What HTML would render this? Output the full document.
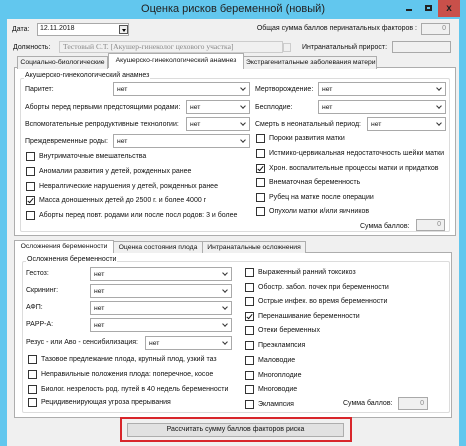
<!DOCTYPE html>
<html><head><meta charset="utf-8"><style>
*{box-sizing:border-box;margin:0;padding:0}
body{width:466px;height:446px;background:#62c7ee;position:relative;overflow:hidden;font-family:"Liberation Sans",sans-serif;font-size:7px;color:#111}
.a{position:absolute;white-space:nowrap}
.cl{position:absolute;left:7px;top:19px;width:452px;height:427px;background:#f0f0f0}
.in{position:absolute;background:#fff;border:1px solid #a9a9a9;line-height:10px}
.cb{position:absolute;background:#fff;border:1px solid #a9a9a9;height:14px;padding:3px 0 0 3px;font-size:6.8px;white-space:nowrap}
.cb:after{content:"";position:absolute;right:4px;top:3px;width:3px;height:3px;border-right:1px solid #333;border-bottom:1px solid #333;transform:rotate(45deg)}
.ck{position:absolute;white-space:nowrap;padding-left:13px;line-height:9px}
.ck:before{content:"";position:absolute;left:0;top:0;width:9px;height:9px;border:1px solid #333;background:#fff;box-sizing:border-box}
.ck.on:after{content:"";position:absolute;left:3px;top:1px;width:2px;height:5px;border-right:1.5px solid #111;border-bottom:1.5px solid #111;transform:rotate(40deg)}
.gb{position:absolute;border:1px solid #dcdcdc;border-radius:2px}
.tab{position:absolute;border:1px solid #adadad;border-bottom:none;background:#f0f0f0;padding:2px 2px;height:13px;white-space:nowrap;overflow:hidden;text-align:center;font-size:6.8px}
.panel{position:absolute;border:1px solid #adadad;background:#fff}
</style></head><body>
<div class="a" style="left:0;top:3px;width:466px;text-align:center;font-size:11px;color:#222">Оценка рисков беременной (новый)</div>
<div class="a" style="left:399px;top:0;width:20px;height:17px;background:#62c7ee"><div style="position:absolute;left:7px;top:9px;width:6px;height:2px;background:#222"></div></div>
<div class="a" style="left:419px;top:0;width:19px;height:17px"><div style="position:absolute;left:6px;top:5px;width:7px;height:6px;border:2px solid #222"></div></div>
<div class="a" style="left:438px;top:0;width:22px;height:17px;background:#c9504a;color:#222;font-weight:bold;font-size:10px;text-align:center;line-height:17px">x</div>
<div class="cl"></div>

<div class="a" style="left:12px;top:26px">Дата:</div>
<div class="in" style="left:37px;top:23px;width:92px;height:13px;padding:0 2px;font-size:7px">12.11.2018</div>
<div class="a" style="left:119px;top:25px;width:9px;height:9px;border:1px solid #555;background:#eee"><div style="position:absolute;left:2px;top:3px;border:2px solid transparent;border-top:3px solid #000"></div></div>
<div class="a" style="right:49px;top:25px">Общая сумма баллов перинатальных факторов :</div>
<div class="in" style="left:421px;top:23px;width:29px;height:12px;background:#f0f0f0;text-align:right;padding-right:3px;color:#888">0</div>

<div class="a" style="left:13px;top:44px">Должность:</div>
<div class="in" style="left:59px;top:41px;width:224px;height:12px;background:#f0f0f0;border-color:#ccc;color:#888;font-family:'Liberation Serif',serif;font-size:7.6px;padding-left:3px;white-space:nowrap;overflow:hidden">Тестовый С.Т.  [Акушер-гинеколог цехового участка]</div>
<div class="a" style="left:283px;top:43px;width:8px;height:9px;border:1px solid #ccc"></div>
<div class="a" style="left:302px;top:44px">Интранатальный прирост:</div>
<div class="in" style="left:392px;top:41px;width:59px;height:12px;background:#f0f0f0"></div>

<div class="panel" style="left:14px;top:67px;width:442px;height:169px"></div>
<div class="tab" style="left:17px;top:56px;width:91px">Социально-биологические</div>
<div class="tab" style="left:243px;top:56px;width:134px">Экстрагенитальные заболевания матери</div>
<div class="tab" style="left:108px;top:53px;width:136px;height:15px;background:#fff;padding-top:3px">Акушерско-гинекологический анамнез</div>

<div class="gb" style="left:20px;top:78px;width:430px;height:154px"></div>
<div class="a" style="left:24px;top:72px;background:#fff;padding:0 1px">Акушерско-гинекологический анамнез</div>
<div class="a" style="left:25px;top:86px">Паритет:</div><div class="cb" style="left:113px;top:82px;width:137px">нет</div>
<div class="a" style="left:255px;top:86px">Мертворождение:</div><div class="cb" style="left:318px;top:82px;width:128px">нет</div>
<div class="a" style="left:25px;top:104px">Аборты перед первыми предстоящими родами:</div><div class="cb" style="left:186px;top:100px;width:64px">нет</div>
<div class="a" style="left:255px;top:104px">Бесплодие:</div><div class="cb" style="left:318px;top:100px;width:128px">нет</div>
<div class="a" style="left:25px;top:121px">Вспомогательные репродуктивные технологии:</div><div class="cb" style="left:186px;top:117px;width:64px">нет</div>
<div class="a" style="left:255px;top:121px">Смерть в неонатальный период:</div><div class="cb" style="left:367px;top:117px;width:79px">нет</div>
<div class="a" style="left:25px;top:138px">Преждевременные роды:</div><div class="cb" style="left:113px;top:134px;width:137px">нет</div>
<div class="ck" style="left:26px;top:152px">Внутриматочные вмешательства</div>
<div class="ck" style="left:26px;top:167px">Аномалии развития у детей, рожденных ранее</div>
<div class="ck" style="left:26px;top:182px">Невралгические нарушения у детей, рожденных ранее</div>
<div class="ck on" style="left:26px;top:196px">Масса доношенных детей до 2500 г. и более 4000 г</div>
<div class="ck" style="left:26px;top:211px">Аборты перед повт. родами или после посл родов: 3 и более</div>
<div class="ck" style="left:256px;top:134px">Пороки развития матки</div>
<div class="ck" style="left:256px;top:149px">Истмико-цервикальная недостаточность шейки матки</div>
<div class="ck on" style="left:256px;top:164px">Хрон. воспалительные процессы матки и придатков</div>
<div class="ck" style="left:256px;top:178px">Внематочная беременность</div>
<div class="ck" style="left:256px;top:193px">Рубец на матке после операции</div>
<div class="ck" style="left:256px;top:207px">Опухоли матки и/или яичников</div>
<div class="a" style="left:360px;top:223px">Сумма баллов:</div>
<div class="in" style="left:416px;top:219px;width:29px;height:12px;background:#f0f0f0;text-align:right;padding-right:3px;color:#888">0</div>

<div class="panel" style="left:14px;top:252px;width:438px;height:166px"></div>
<div class="tab" style="left:14px;top:240px;width:100px;height:13px;background:#fff;border-color:#adadad">Осложнения беременности</div>
<div class="tab" style="left:113px;top:241px;width:90px;height:12px">Оценка состояния плода</div>
<div class="tab" style="left:202px;top:241px;width:104px;height:12px">Интранатальные осложнения</div>

<div class="gb" style="left:22px;top:261px;width:428px;height:152px"></div>
<div class="a" style="left:26px;top:256px;background:#fff;padding:0 1px">Осложнения беременности</div>
<div class="a" style="left:26px;top:270px">Гестоз:</div><div class="cb" style="left:90px;top:267px;width:142px">нет</div>
<div class="a" style="left:26px;top:287px">Скрининг:</div><div class="cb" style="left:90px;top:284px;width:142px">нет</div>
<div class="a" style="left:26px;top:304px">АФП:</div><div class="cb" style="left:90px;top:301px;width:142px">нет</div>
<div class="a" style="left:26px;top:321px">PAPP-A:</div><div class="cb" style="left:90px;top:318px;width:142px">нет</div>
<div class="a" style="left:26px;top:339px">Резус - или Аво - сенсибилизация:</div><div class="cb" style="left:145px;top:336px;width:87px">нет</div>
<div class="ck" style="left:28px;top:355px">Тазовое предлежание плода, крупный плод, узкий таз</div>
<div class="ck" style="left:28px;top:370px">Неправильные положения плода: поперечное, косое</div>
<div class="ck" style="left:28px;top:385px">Биолог. незрелость род. путей в 40 недель беременности</div>
<div class="ck" style="left:28px;top:398px">Рецидивенирующая угроза прерывания</div>
<div class="ck" style="left:245px;top:268px">Выраженный ранний токсикоз</div>
<div class="ck" style="left:245px;top:283px">Обостр. забол. почек при беременности</div>
<div class="ck" style="left:245px;top:297px">Острые инфек. во время беременности</div>
<div class="ck on" style="left:245px;top:312px">Перенашивание беременности</div>
<div class="ck" style="left:245px;top:326px">Отеки беременных</div>
<div class="ck" style="left:245px;top:341px">Преэклампсия</div>
<div class="ck" style="left:245px;top:356px">Маловодие</div>
<div class="ck" style="left:245px;top:371px">Многоплодие</div>
<div class="ck" style="left:245px;top:385px">Многоводие</div>
<div class="ck" style="left:245px;top:400px">Эклампсия</div>
<div class="a" style="left:343px;top:400px">Сумма баллов:</div>
<div class="in" style="left:398px;top:397px;width:30px;height:13px;background:#f0f0f0;text-align:right;padding-right:3px;color:#888;line-height:11px">0</div>

<div class="a" style="left:120px;top:417px;width:232px;height:25px;border:2px solid #d8262b"></div>
<div class="a" style="left:127px;top:423px;width:217px;height:14px;background:#e1e1e1;border:1px solid #adadad;text-align:center;line-height:12px">Рассчитать сумму баллов факторов риска</div>
</body></html>
